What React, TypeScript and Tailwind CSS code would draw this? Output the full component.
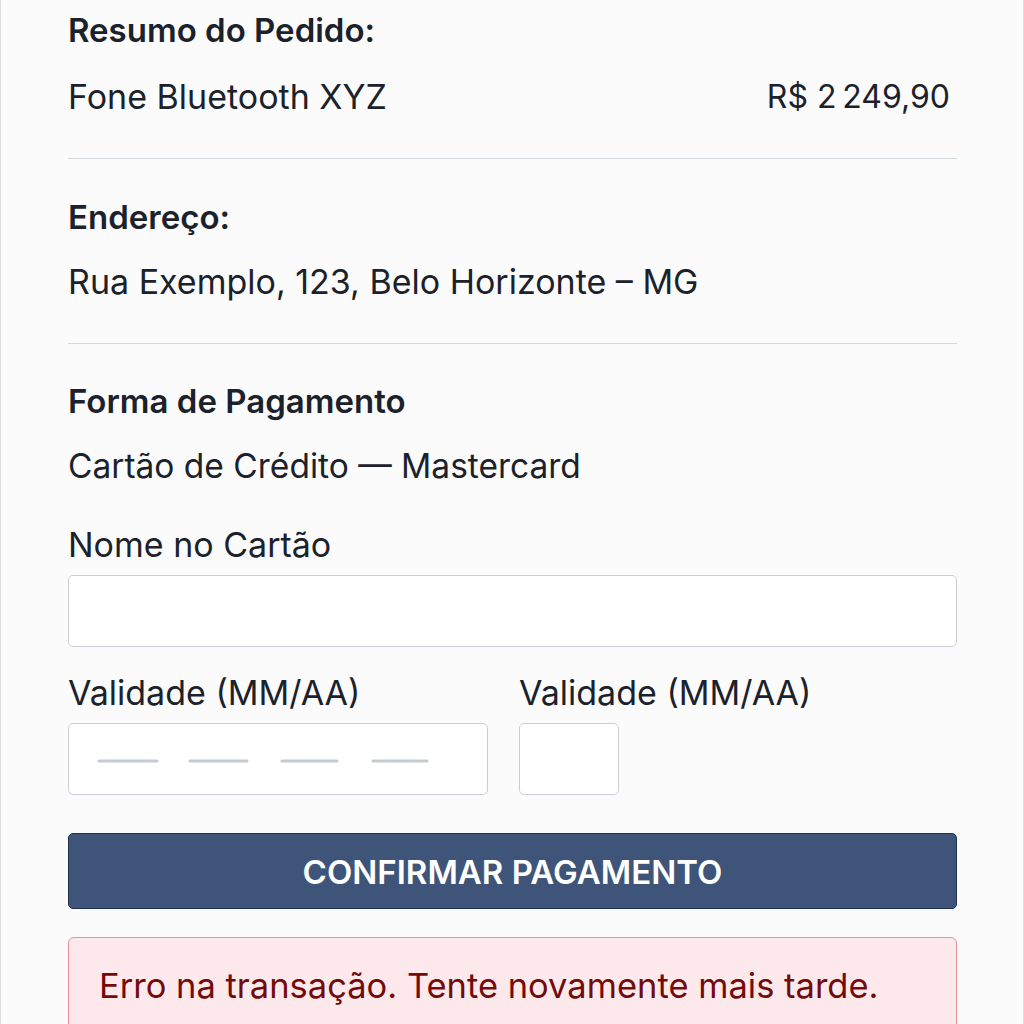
import React from 'react';

const Divider = ({ className = '' }: { className?: string }) => (
  <div className={`h-px bg-[#d3d8dd] ${className}`} />
);

const Field = ({ className = '', children }: { className?: string; children?: React.ReactNode }) => (
  <div className={`h-[72px] rounded-[5px] border border-[#c9cfd5] bg-white ${className}`}>{children}</div>
);

export default function App() {
  const dashes = [
    [97, 157],
    [188, 247],
    [280, 337],
    [371, 427],
  ];

  return (
    <div className="min-h-screen w-full overflow-hidden bg-[#fbfbfb] border-x border-[#dcdcdc] text-[#1b222c] font-['Inter','Noto_Sans',sans-serif]">
      <div className="ml-[67px] w-[889px] pt-[10px]">
        {/* resumo */}
        <h2 className="text-[33px] leading-[40px] font-semibold">Resumo do Pedido:</h2>
        <div className="mt-[27px] flex items-center justify-between pr-[7px] text-[34px] leading-[40px]">
          <span>Fone Bluetooth XYZ</span>
          <span className="text-[32px]">R$ 2{'\u202F'}249,90</span>
        </div>
        <Divider className="mt-[41px]" />

        {/* endereço */}
        <h2 className="mt-[38px] text-[33px] leading-[40px] font-semibold">Endereço:</h2>
        <p className="mt-[25px] text-[34px] leading-[40px]">Rua Exemplo, 123, Belo Horizonte – MG</p>
        <Divider className="mt-[41px]" />

        {/* pagamento */}
        <h2 className="mt-[37px] text-[33px] leading-[40px] font-semibold">Forma de Pagamento</h2>
        <p className="mt-[25px] text-[33.5px] leading-[40px]">Cartão de Crédito — Mastercard</p>

        <label className="mt-[39px] block text-[34px] leading-[40px]">Nome no Cartão</label>
        <Field className="mt-[10px] h-[71px]" />

        <div className="mt-[26px] flex gap-[31px]">
          <div className="w-[420px]">
            <label className="block text-[34px] leading-[40px]">Validade (MM/AA)</label>
            <Field className="mt-[10px] flex items-center">
              <svg width="420" height="72" viewBox="0 0 420 72" className="shrink-0">
                {dashes.map(([a, b]) => (
                  <line key={a} x1={a - 68 + 1} y1="38" x2={b - 68 - 1} y2="38" stroke="#c5cbd1" strokeWidth="3" strokeLinecap="round" />
                ))}
              </svg>
            </Field>
          </div>
          <div>
            <label className="block text-[34px] leading-[40px]">Validade (MM/AA)</label>
            <Field className="mt-[10px] w-[100px]" />
          </div>
        </div>

        <button className="mt-[38px] flex h-[76px] w-full items-center justify-center rounded-[5px] border border-[#1f3052] bg-[#3e5479] pt-[3px] text-[33px] font-semibold text-white">
          CONFIRMAR PAGAMENTO
        </button>

        <div className="mt-[28px] h-[110px] rounded-[6px] border border-[#ee8d93] bg-[#fde9eb] pl-[30px] pt-[26px]">
          <p className="text-[34.5px] leading-[44px] text-[#730b0b]">Erro na transação. Tente novamente mais tarde.</p>
        </div>
      </div>
    </div>
  );
}
